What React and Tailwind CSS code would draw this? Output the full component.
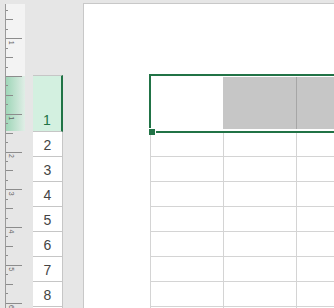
const GREEN = '#217346';

function Ruler() {
  const step = 37.75 / 4;
  const ticks = [];
  for (let k = -8; k <= 25; k++) {
    const y = 76 + k * step;
    if (y < 4 || y > 308) continue;
    const len = k % 4 === 0 ? 16 : k % 2 === 0 ? 7 : 2;
    ticks.push({ y, len, k });
  }
  const labels = [
    { y: 38.25, t: '1' },
    { y: 113.75, t: '1' },
    { y: 151.5, t: '2' },
    { y: 189.25, t: '3' },
    { y: 227, t: '4' },
    { y: 264.75, t: '5' },
    { y: 302.5, t: '6' },
  ];
  return (
    <svg width="33" height="308" className="block">
      <defs>
        <linearGradient id="rowhl" x1="0" x2="1" y1="0" y2="0">
          <stop offset="0" stopColor="#9fd6b8" />
          <stop offset="1" stopColor="#e0eee6" />
        </linearGradient>
      </defs>
      <rect x="6" y="4" width="19" height="72" fill="#f3f3f3" />
      <rect x="6" y="76" width="19" height="55" fill="url(#rowhl)" />
      <line x1="5.5" y1="4" x2="5.5" y2="308" stroke="#9a9a9a" />
      {ticks.map((t) => (
        <line
          key={t.k}
          x1="6"
          x2={6 + t.len}
          y1={Math.round(t.y) + 0.5}
          y2={Math.round(t.y) + 0.5}
          stroke="#8c8c8c"
        />
      ))}
      {labels.map((l, i) => (
        <text
          key={i}
          x="0"
          y="0"
          fontSize="7"
          fill="#666"
          fontFamily="Liberation Sans, sans-serif"
          textAnchor="middle"
          transform={`translate(9 ${l.y + 4.5}) rotate(90)`}
        >
          {l.t}
        </text>
      ))}
    </svg>
  );
}

function RowHeaders() {
  const rows = [2, 3, 4, 5, 6, 7, 8];
  return (
    <div className="w-[30px] pt-[75px] flex flex-col" style={{ fontFamily: '"Liberation Sans", Arial, sans-serif' }}>
      <div className="h-[57px] shrink-0 bg-[#d3f0e0] border-t border-b border-t-[#c6c6c6] border-b-[#c6c6c6] border-r-2 border-r-[#217346] flex items-end justify-center pb-[3px] text-[14px] leading-[16px] text-[#217346]">
        1
      </div>
      {rows.map((n) => (
        <div
          key={n}
          className="h-[25px] shrink-0 bg-white border-b border-r border-[#c6c6c6] flex items-end justify-center pb-[3px] text-[14px] leading-[16px] text-[#444]"
        >
          {n}
        </div>
      ))}
      <div className="h-[25px] shrink-0 bg-white border-r border-[#c6c6c6]" />
    </div>
  );
}

function SelectedRow() {
  return (
    <div className="relative ml-[65px] border-t-2 border-l-2 border-b-2 border-[#217346] pt-[1px] pb-[2px] flex bg-white">
      <div className="w-[72px] h-[52px] shrink-0 bg-white" />
      <div className="w-[74px] h-[52px] shrink-0 bg-[#c6c6c6] border-r border-[#a6a6a6]" />
      <div className="flex-1 h-[52px] bg-[#c6c6c6]" />
      <div className="absolute left-[-2px] bottom-[-4px] w-[7px] h-[7px] bg-[#217346] border-r border-t border-white" />
    </div>
  );
}

export default function App() {
  const rows = [24, 25, 25, 25, 25, 25, 25, 25];
  return (
    <div className="w-[334px] h-[308px] overflow-hidden bg-[#e6e6e6] flex">
      <div className="w-[33px] shrink-0">
        <Ruler />
      </div>
      <RowHeaders />
      <div className="w-[20px] shrink-0" />
      <div className="flex-1 mt-[3px] bg-white border-l border-t border-[#c8c8c8] overflow-hidden">
        <div className="pt-[70px] w-[400px]">
          <SelectedRow />
          {rows.map((h, i) => (
            <div
              key={i}
              className="ml-[66px] flex border-b border-[#d4d4d4]"
              style={{ height: h }}
            >
              <div className="w-[73px] shrink-0 border-l border-[#d4d4d4]" />
              <div className="w-[73px] shrink-0 border-l border-[#d4d4d4]" />
              <div className="flex-1 border-l border-[#d4d4d4]" />
            </div>
          ))}
        </div>
      </div>
    </div>
  );
}
